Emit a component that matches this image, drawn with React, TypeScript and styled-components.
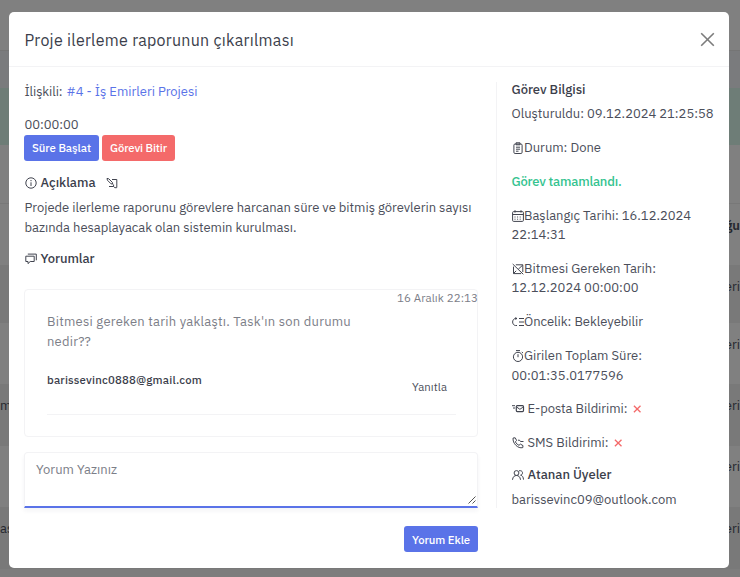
import React, { useLayoutEffect, useRef, useState } from 'react';
import styled, { createGlobalStyle } from 'styled-components';

const Global = createGlobalStyle`
  *, *::before, *::after { box-sizing: border-box; }
  html, body { margin: 0; height: 100%; overflow: hidden; }
  body {
    background: #808080;
    color: #4b4e5a;
    font-family: "IBM Plex Sans", Roboto, "Liberation Sans", sans-serif;
    font-size: 13px;
    line-height: 20px;
  }
`;

/* ---------- page behind the dialog ---------- */

const Page = styled.div`
  width: 740px;
  height: 577px;
  overflow: hidden;
  background: #808080;
`;

const PageBand = styled.div<{ $h: number; $bg: string; $line?: string; $pad?: number; $bold?: boolean }>`
  height: ${p => p.$h}px;
  background: ${p => p.$bg};
  border-bottom: ${p => (p.$line ? `1px solid ${p.$line}` : '0')};
  padding-top: ${p => p.$pad ?? 0}px;
  display: flex;
  justify-content: space-between;
  white-space: nowrap;
  color: #25272e;
  font-size: 13px;
  font-weight: ${p => (p.$bold ? 600 : 400)};
`;

const bands = [
  { h: 51, bg: '#808080', line: '#757575' },
  { h: 37, bg: '#7a7b7d' },
  { h: 57, bg: '#6e7d77' },
  { h: 59, bg: '#808080', line: '#787878' },
  { h: 61, bg: '#808080', right: 'ığu', pad: 12, bold: true },
  { h: 58, bg: '#797979', right: 'eri', pad: 12 },
  { h: 61, bg: '#808080', right: 'eri', pad: 12 },
  { h: 62, bg: '#797979', left: 'm', right: 'eri', pad: 12 },
  { h: 61, bg: '#808080', right: 'eri', pad: 11 },
  { h: 62, bg: '#797979', left: 'as', right: 'eri', pad: 12 },
  { h: 8, bg: '#7d7d7d' },
];

/* ---------- dialog ---------- */

const Overlay = styled.div`
  position: fixed;
  inset: 0;
  padding: 12px 0 0 9px;
`;

const Dialog = styled.section`
  width: 720px;
  height: 556px;
  background: #fff;
  border-radius: 5px;
`;

const Header = styled.header`
  height: 55px;
  padding: 3px 14px 0 15.5px;
  border-bottom: 1px solid #f3f3f5;
  display: flex;
  align-items: center;
  justify-content: space-between;
  svg { display: block; margin-top: -2px; }
`;

const Title = styled.h5`
  margin: 0;
  font-weight: 400;
`;

const Body = styled.div`
  display: flex;
  padding: 15px 15px 0;
`;

const Main = styled.main`
  width: 454px;
  margin-right: 18px;
  display: flex;
  flex-direction: column;
`;

const Side = styled.aside`
  height: 426px;
  flex: 1;
  padding-left: 14.5px;
  border-left: 1px solid #f3f3f5;
  white-space: nowrap;
`;

const Row = styled.div<{ $mt?: number; $gap?: number; $inset?: boolean }>`
  height: 20px;
  margin-top: ${p => p.$mt ?? 0}px;
  padding-left: ${p => (p.$inset ? 0.5 : 0)}px;
  display: flex;
  align-items: center;
  gap: ${p => p.$gap ?? 0}px;
  white-space: nowrap;
`;

const Text = styled.span<{ $size?: number; $color?: string; $weight?: number }>`
  font-size: ${p => p.$size ?? 13}px;
  color: ${p => p.$color ?? 'inherit'};
  font-weight: ${p => p.$weight ?? 400};
  white-space: nowrap;
`;

const IconBox = styled.svg`
  flex: none;
  width: 12px;
  height: 12px;
  fill: none;
  stroke: #41444f;
  stroke-width: 1;
  overflow: visible;
`;

const EditSlot = styled.span`
  display: flex;
  margin-left: 6px;
`;

const Buttons = styled.div`
  display: flex;
  gap: 3px;
`;

const Button = styled.button<{ $bg: string; $w: number; $drop?: number }>`
  width: ${p => p.$w}px;
  height: 26px;
  padding: ${p => p.$drop ?? 0}px 0 0;
  border: 0;
  border-radius: 3px;
  background: ${p => p.$bg};
  color: #fff;
  font: 500 11.375px/24px "IBM Plex Sans", Roboto, sans-serif;
  display: flex;
  align-items: center;
  justify-content: center;
`;

const Card = styled.article`
  height: 148px;
  margin-top: 20px;
  border: 1px solid #f3f3f5;
  border-radius: 4px;
  padding-left: 22px;
`;

const CardDate = styled.div`
  height: 18px;
  line-height: 16px;
  margin-right: -1px;
  display: flex;
  justify-content: flex-end;
`;

const CardFooter = styled.div`
  width: 409px;
  height: 63px;
  padding: 18px 9px 0 0;
  border-bottom: 1px solid #f3f3f5;
  display: flex;
  justify-content: space-between;
`;

const CommentInput = styled.div`
  height: 56px;
  margin-top: 15px;
  padding: 7px 11px;
  border: 1px solid #f3f3f5;
  border-bottom: 2px solid #5a73e8;
  border-radius: 4px 4px 0 0;
  box-shadow: 0 3px 4px rgba(40, 40, 70, 0.05);
  display: flex;
  justify-content: space-between;
`;

const Grip = styled.svg`
  width: 8px;
  height: 8px;
  align-self: flex-end;
  margin: 0 -10px -5px 0;
  stroke: #555;
`;

const Submit = styled.div`
  margin-top: 18px;
  display: flex;
  justify-content: flex-end;
`;

/* Tracks a line of text out so that it occupies the given measure. */
function Fit({ w, children, ...rest }: { w: number; children: string; $size?: number; $color?: string; $weight?: number }) {
  const ref = useRef<HTMLSpanElement>(null);
  const [spacing, setSpacing] = useState(0);
  useLayoutEffect(() => {
    if (ref.current) setSpacing((w - ref.current.getBoundingClientRect().width) / children.length);
  }, [w, children]);
  return (
    <Text ref={ref} style={{ letterSpacing: spacing }} {...rest}>
      {children}
    </Text>
  );
}

type IconName = 'info' | 'edit' | 'comments' | 'clipboard' | 'calendar' | 'calendarOff' | 'priority' | 'timer' | 'mail' | 'phone' | 'people' | 'cross';

const shapes: Record<IconName, React.ReactNode> = {
  info: <><circle cx="6" cy="6" r="5.2" /><path d="M6 5.3V9M6 3v1.2" /></>,
  edit: <><path d="M1 1.4 1.4 3.2 5 6.8l1.7.3-.3-1.7-3.6-3.6zM6 2.5h4.8v8" /><path d="M3 9.5h4.6M7.6 7.5v2l1.2 1.2h2" /></>,
  comments: <><path d="M.8 3.2h8.4v5.3H5.2L3 10.6V8.5H.8zM2.8 1.1h8.5v6.2" /></>,
  clipboard: <><rect x="1.9" y="2" width="8.2" height="9.5" rx="1.2" /><path d="M4 2.8V.8h4v2zM4 5.2h4M4 7.2h4M4 9.2h2.5" /></>,
  calendar: <><rect x=".6" y="1.6" width="10.8" height="9.8" rx="1" /><path d="M.6 4.5h10.8M3 .2v2.4M9 .2v2.4" /><path d="M2.5 7h7.5M2.5 9.2h7.5" strokeDasharray="1 1.6" /></>,
  calendarOff: <><path d="M.7 1l10.6 10.3M1.5 3.6v7h7.6M3.8 1.8h7v7.2M6.3 6.2l4.3-4M1.7 10.3l2.5-2.5" /></>,
  priority: <><path d="M5 2.5H3.4C-.3 3-.3 9 3.4 9.5H5M7 2.5h5M7 6h5M7 9.5h5M3.8 1.2v2.6" /></>,
  timer: <><circle cx="6" cy="6.9" r="4.6" /><path d="M4 .6h4M6 4.2v3M9.8 2l1.2 1" /></>,
  mail: <><path d="M0 2.7h3M1 5h2" /><rect x="4.3" y="2.7" width="7.2" height="5.9" rx="1" strokeWidth="1.2" /><path d="M5 4.3 7.9 6.3l2.9-2" /></>,
  phone: <><path d="M1.1 1 3.2.8l1.4 2.6-1.2 1.4c.8 1.7 2 2.8 3.6 3.5l1.4-1.2 2.6 1.5-.2 2C6 12 .3 6.2 1.1 1zM6 3.2h1.5l1 1.3h3" /></>,
  people: <><circle cx="4.5" cy="4" r="2.4" /><path d="M.5 10.8C.8 7.8 2.4 6.5 4.5 6.5S8.2 7.8 8.5 10.8M7 1.8c4-1 4.7 3.6 1.6 4.4 1.9.4 2.7 1.9 2.9 4.4" /></>,
  cross: <path d="M1.9 2.7l6.6 6.6M8.5 2.7l-6.6 6.6" stroke="#f46a6a" strokeWidth="1.3" />,
};

const Icon = ({ name }: { name: IconName }) => <IconBox viewBox="0 0 12 12">{shapes[name]}</IconBox>;

const dark = '#3b3e4b';
const muted = '#7c7e88';

export default function App() {
  return (
    <>
      <Global />
      <Page aria-hidden>
        {bands.map((b, i) => (
          <PageBand key={i} $h={b.h} $bg={b.bg} $line={b.line} $pad={b.pad} $bold={b.bold}>
            <span>{b.left}</span>
            <span>{b.right}</span>
          </PageBand>
        ))}
      </Page>
      <Overlay>
        <Dialog role="dialog">
          <Header>
            <Title><Fit w={269.5} $size={16} $color={dark}>Proje ilerleme raporunun çıkarılması</Fit></Title>
            <svg width="15" height="15" viewBox="0 0 15 15" stroke="#7c7c7c" strokeWidth="1.6">
              <path d="M1.2 1.2l12.6 12.6M13.8 1.2 1.2 13.8" />
            </svg>
          </Header>
          <Body>
            <Main>
              <Row $gap={4} $inset>
                <Fit w={38}>İlişkili:</Fit>
                <Fit w={131} $color="#5a73e8">#4 - İş Emirleri Projesi</Fit>
              </Row>
              <Row $mt={13} $inset><Fit w={54}>00:00:00</Fit></Row>
              <Buttons>
                <Button $w={75} $bg="#5a73e8"><Fit w={59} $size={11.375} $weight={500}>Süre Başlat</Fit></Button>
                <Button $w={73} $bg="#f46a6a"><Fit w={57} $size={11.375} $weight={500}>Görevi Bitir</Fit></Button>
              </Buttons>
              <Row $mt={12} $gap={4} $inset>
                <Icon name="info" />
                <Fit w={55} $color={dark} $weight={500}>Açıklama</Fit>
                <EditSlot><Icon name="edit" /></EditSlot>
              </Row>
              <Row $mt={5} $inset><Fit w={447}>Projede ilerleme raporunu görevlere harcanan süre ve bitmiş görevlerin sayısı</Fit></Row>
              <Row $inset><Fit w={272}>bazında hesaplayacak olan sistemin kurulması.</Fit></Row>
              <Row $mt={11} $gap={4} $inset>
                <Icon name="comments" />
                <Fit w={54} $color={dark} $weight={500}>Yorumlar</Fit>
              </Row>
              <Card>
                <CardDate><Fit w={81} $size={11.5} $color={muted}>16 Aralık 22:13</Fit></CardDate>
                <Row $mt={4}><Fit w={304} $color={muted}>Bitmesi gereken tarih yaklaştı. Task'ın son durumu</Fit></Row>
                <Row><Fit w={44} $color={muted}>nedir??</Fit></Row>
                <CardFooter>
                  <Row><Fit w={155} $size={11.375} $color={dark} $weight={500}>barissevinc0888@gmail.com</Fit></Row>
                  <Row $mt={7}><Fit w={35} $size={11.375}>Yanıtla</Fit></Row>
                </CardFooter>
              </Card>
              <CommentInput>
                <Fit w={81} $color={muted}>Yorum Yazınız</Fit>
                <Grip viewBox="0 0 8 8"><path d="M.5 7.5l7-7M4.5 7.5l3-3" /></Grip>
              </CommentInput>
              <Submit>
                <Button $w={74} $bg="#5a73e8" $drop={2}><Fit w={58} $size={11.375} $weight={500}>Yorum Ekle</Fit></Button>
              </Submit>
            </Main>
            <Side>
              <Row $mt={-2}><Fit w={74} $color={dark} $weight={500}>Görev Bilgisi</Fit></Row>
              <Row $mt={4}><Fit w={202}>Oluşturuldu: 09.12.2024 21:25:58</Fit></Row>
              <Row $mt={14} $gap={0.5}><Icon name="clipboard" /><Fit w={77}>Durum: Done</Fit></Row>
              <Row $mt={14}><Fit w={110} $color="#34c38f" $weight={500}>Görev tamamlandı.</Fit></Row>
              <Row $mt={14} $gap={0.5}><Icon name="calendar" /><Fit w={167}>Başlangıç Tarihi: 16.12.2024</Fit></Row>
              <Row $mt={-1}><Fit w={54}>22:14:31</Fit></Row>
              <Row $mt={14} $gap={0.5}><Icon name="calendarOff" /><Fit w={132}>Bitmesi Gereken Tarih:</Fit></Row>
              <Row $mt={-1}><Fit w={127}>12.12.2024 00:00:00</Fit></Row>
              <Row $mt={14} $gap={0.5}><Icon name="priority" /><Fit w={119}>Öncelik: Bekleyebilir</Fit></Row>
              <Row $mt={14} $gap={0.5}><Icon name="timer" /><Fit w={118}>Girilen Toplam Süre:</Fit></Row>
              <Row><Fit w={112}>00:01:35.0177596</Fit></Row>
              <Row $mt={13} $gap={4}><Icon name="mail" /><Fit w={100}>E-posta Bildirimi:</Fit><Icon name="cross" /></Row>
              <Row $mt={14} $gap={4}><Icon name="phone" /><Fit w={81}>SMS Bildirimi:</Fit><Icon name="cross" /></Row>
              <Row $mt={12} $gap={4}><Icon name="people" /><Fit w={84} $color={dark} $weight={500}>Atanan Üyeler</Fit></Row>
              <Row $mt={5}><Fit w={165}>barissevinc09@outlook.com</Fit></Row>
            </Side>
          </Body>
        </Dialog>
      </Overlay>
    </>
  );
}
